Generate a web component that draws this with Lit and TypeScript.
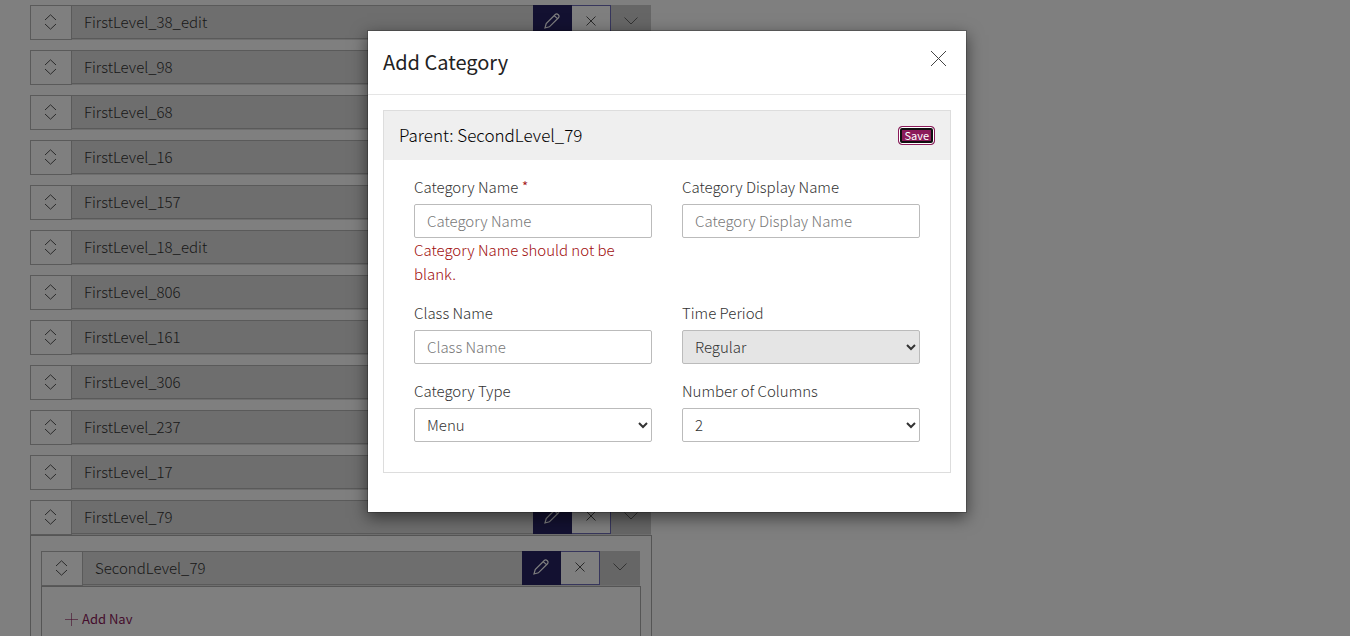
import { LitElement, html, css, svg } from "lit";
import { customElement, property } from "lit/decorators.js";

const updown = svg`<path d="M1 6 6.500.800 12 6M1 10l5.500 5.200L12 10"/>`;

@customElement("nav-row")
class NavRow extends LitElement {
  @property() name = "";

  static styles = css`
    :host {
      display: block;
      font: 300 15px/24px "Source Sans Pro", "Noto Sans CJK SC", sans-serif;
      color: #333;
    }
    .row {
      display: flex;
      height: 35px;
      box-sizing: border-box;
      background: #ddd;
    }
    button {
      display: grid;
      place-items: center;
      box-sizing: border-box;
      margin: 0;
      padding: 0 1px 2px 0;
      border: 0;
      font: inherit;
      color: inherit;
    }
    svg {
      display: block;
      fill: none;
      stroke: currentColor;
    }
    .handle {
      width: 42px;
      border: 1px solid #b4b4b4;
      background: #fff;
      color: #555;
    }
    .title {
      flex: 1;
      box-sizing: border-box;
      height: 34px;
      padding: 4px 12px;
      border: solid #b4b4b4;
      border-width: 1px 0;
    }
    .edit,
    .remove,
    .toggle {
      width: 39px;
      height: 34px;
    }
    .edit {
      background: #262262;
      color: #fff;
    }
    .remove {
      padding-right: 0;
      border: 1px solid #6f6cb8;
      border-left: 0;
      background: #fff;
      color: #555;
    }
    .toggle {
      width: 40px;
      background: #ccc;
      color: #666;
    }
  `;

  render() {
    return html`
      <div class="row">
        <button class="handle" aria-label="Move ${this.name}">
          <svg width="13" height="16" viewBox="0 0 13 16">${updown}</svg>
        </button>
        <div class="title">${this.name}</div>
        <button class="edit" aria-label="Edit ${this.name}">
          <svg width="16" height="16" viewBox="0 0 16 16" stroke-width="1.2">
            <path d="M1 15l1.200-4.400L11.300 1.500a1.900 1.900 0 0 1 2.700 0l.5.5a1.900 1.900 0 0 1 0 2.700L5.400 13.800zM10.300 2.600l3.100 3.100" />
          </svg>
        </button>
        <button class="remove" aria-label="Remove ${this.name}">
          <svg width="10" height="10" viewBox="0 0 10 10"><path d="M.5.5l9 9M9.500.5l-9 9" /></svg>
        </button>
        <button class="toggle" aria-label="Expand ${this.name}">
          <svg width="14" height="8" viewBox="0 0 14 8"><path d="M.5.5 7 7 13.500.5" /></svg>
        </button>
      </div>
    `;
  }
}

@customElement("category-dialog")
class CategoryDialog extends LitElement {
  static styles = css`
    :host {
      display: block;
      font: 300 15px/24px "Source Sans Pro", "Noto Sans CJK SC", sans-serif;
      color: #333;
    }
    .dialog {
      box-sizing: border-box;
      width: 600px;
      max-width: 100%;
      margin: 30px auto;
      border: 1px solid rgba(0, 0, 0, 0.2);
      background: #fff;
      background-clip: padding-box;
      box-shadow: 0 5px 15px rgba(0, 0, 0, 0.5);
    }
    .head {
      display: flex;
      justify-content: space-between;
      align-items: flex-start;
      padding: 15px;
      border-bottom: 1px solid #e5e5e5;
    }
    h2,
    h3 {
      margin: 0;
    }
    h2 {
      padding-bottom: 1px;
      color: #222;
      font-size: 20px;
      font-weight: 400;
      line-height: 32px;
    }
    h3 {
      color: #000;
      font-size: 17px;
      font-weight: 300;
      line-height: 24px;
    }
    .close {
      display: block;
      padding: 4px;
      border: 0;
      background: none;
      color: #444;
    }
    .close svg {
      display: block;
      fill: none;
      stroke: currentColor;
    }
    .body {
      padding: 15px 15px 39px;
    }
    .panel {
      border: 1px solid #ddd;
    }
    .bar {
      display: flex;
      justify-content: space-between;
      align-items: center;
      padding: 12px 15px 13px;
      background: #efefef;
    }
    .save {
      padding: 0 5px;
      border: 1px solid #8b1a5a;
      border-radius: 4px;
      background: #8b1a5a;
      color: #fff;
      font: 400 11px/17px "Source Sans Pro", "Noto Sans CJK SC", sans-serif;
      box-shadow: inset 0 0 0 1px #fff, inset 0 0 0 3px #101010;
    }
    form {
      display: grid;
      grid-template-columns: 1fr 1fr;
      gap: 15px 30px;
      padding: 15px 30px 30px;
    }
    label {
      display: block;
      margin-bottom: 5px;
    }
    .req,
    .error {
      color: #a00c0c;
    }
    input,
    select {
      display: block;
      box-sizing: border-box;
      width: 100%;
      height: 34px;
      margin: 0;
      border: 1px solid #bbb;
      border-radius: 2px;
      background: #fff;
      color: #333;
      font: inherit;
    }
    input {
      padding: 3px 12px 5px;
    }
    select {
      padding: 3px 8px 5px;
    }
    input::placeholder {
      color: #777;
    }
    select:disabled {
      background: #e5e5e5;
      opacity: 1;
    }
  `;

  render() {
    return html`
      <section class="dialog" role="dialog" aria-labelledby="title">
        <header class="head">
          <h2 id="title">Add Category</h2>
          <button class="close" aria-label="Close">
            <svg width="17" height="17" viewBox="0 0 17 17"><path d="M1 1l15 15M16 1 1 16" /></svg>
          </button>
        </header>
        <div class="body">
          <div class="panel">
            <div class="bar">
              <h3>Parent: SecondLevel_79</h3>
              <button class="save" type="submit" form="category">Save</button>
            </div>
            <form id="category">
              <div>
                <label for="name">Category Name <span class="req">*</span></label>
                <input id="name" placeholder="Category Name" />
                <div class="error">Category Name should not be blank.</div>
              </div>
              <div>
                <label for="display">Category Display Name</label>
                <input id="display" placeholder="Category Display Name" />
              </div>
              <div>
                <label for="class">Class Name</label>
                <input id="class" placeholder="Class Name" />
              </div>
              <div>
                <label for="period">Time Period</label>
                <select id="period" disabled><option>Regular</option></select>
              </div>
              <div>
                <label for="type">Category Type</label>
                <select id="type"><option>Menu</option></select>
              </div>
              <div>
                <label for="columns">Number of Columns</label>
                <select id="columns"><option>2</option></select>
              </div>
            </form>
          </div>
        </div>
      </section>
    `;
  }
}

@customElement("app-root")
class AppRoot extends LitElement {
  names = ["38_edit", "98", "68", "16", "157", "18_edit", "806", "161", "306", "237", "17", "79"];

  static styles = css`
    :host {
      display: block;
      position: relative;
      height: 100vh;
      overflow: hidden;
      background: #fff;
      font: 15px/24px "Source Sans Pro", "Noto Sans CJK SC", sans-serif;
    }
    .tree {
      box-sizing: border-box;
      width: 50%;
      padding: 5px 23px 0 30px;
    }
    .list {
      display: grid;
      gap: 10px;
      margin-right: 1px;
    }
    .children {
      padding: 15px 11px 0 10px;
      border: 1px solid #aaa;
    }
    .children .children {
      margin-right: -1px;
      padding: 20px 23px;
      height: 80px;
    }
    .add {
      display: flex;
      align-items: center;
      gap: 4px;
      color: #8b1a5a;
      font-size: 13px;
      text-decoration: none;
    }
    .add svg {
      fill: none;
      stroke: currentColor;
      stroke-width: 0.6;
    }
    .overlay {
      position: absolute;
      inset: 0;
      padding-right: 16px;
      background: rgba(0, 0, 0, 0.5);
    }
  `;

  render() {
    return html`
      <main class="tree">
        <div class="list">
          ${this.names.map((n) => html`<nav-row name="FirstLevel_${n}"></nav-row>`)}
        </div>
        <div class="children">
          <nav-row name="SecondLevel_79"></nav-row>
          <div class="children">
            <a class="add" href="#">
              <svg width="13" height="13" viewBox="0 0 13 13"><path d="M6.500 0v13M0 6.500h13" /></svg>
              Add Nav
            </a>
          </div>
        </div>
      </main>
      <div class="overlay"><category-dialog></category-dialog></div>
    `;
  }
}
